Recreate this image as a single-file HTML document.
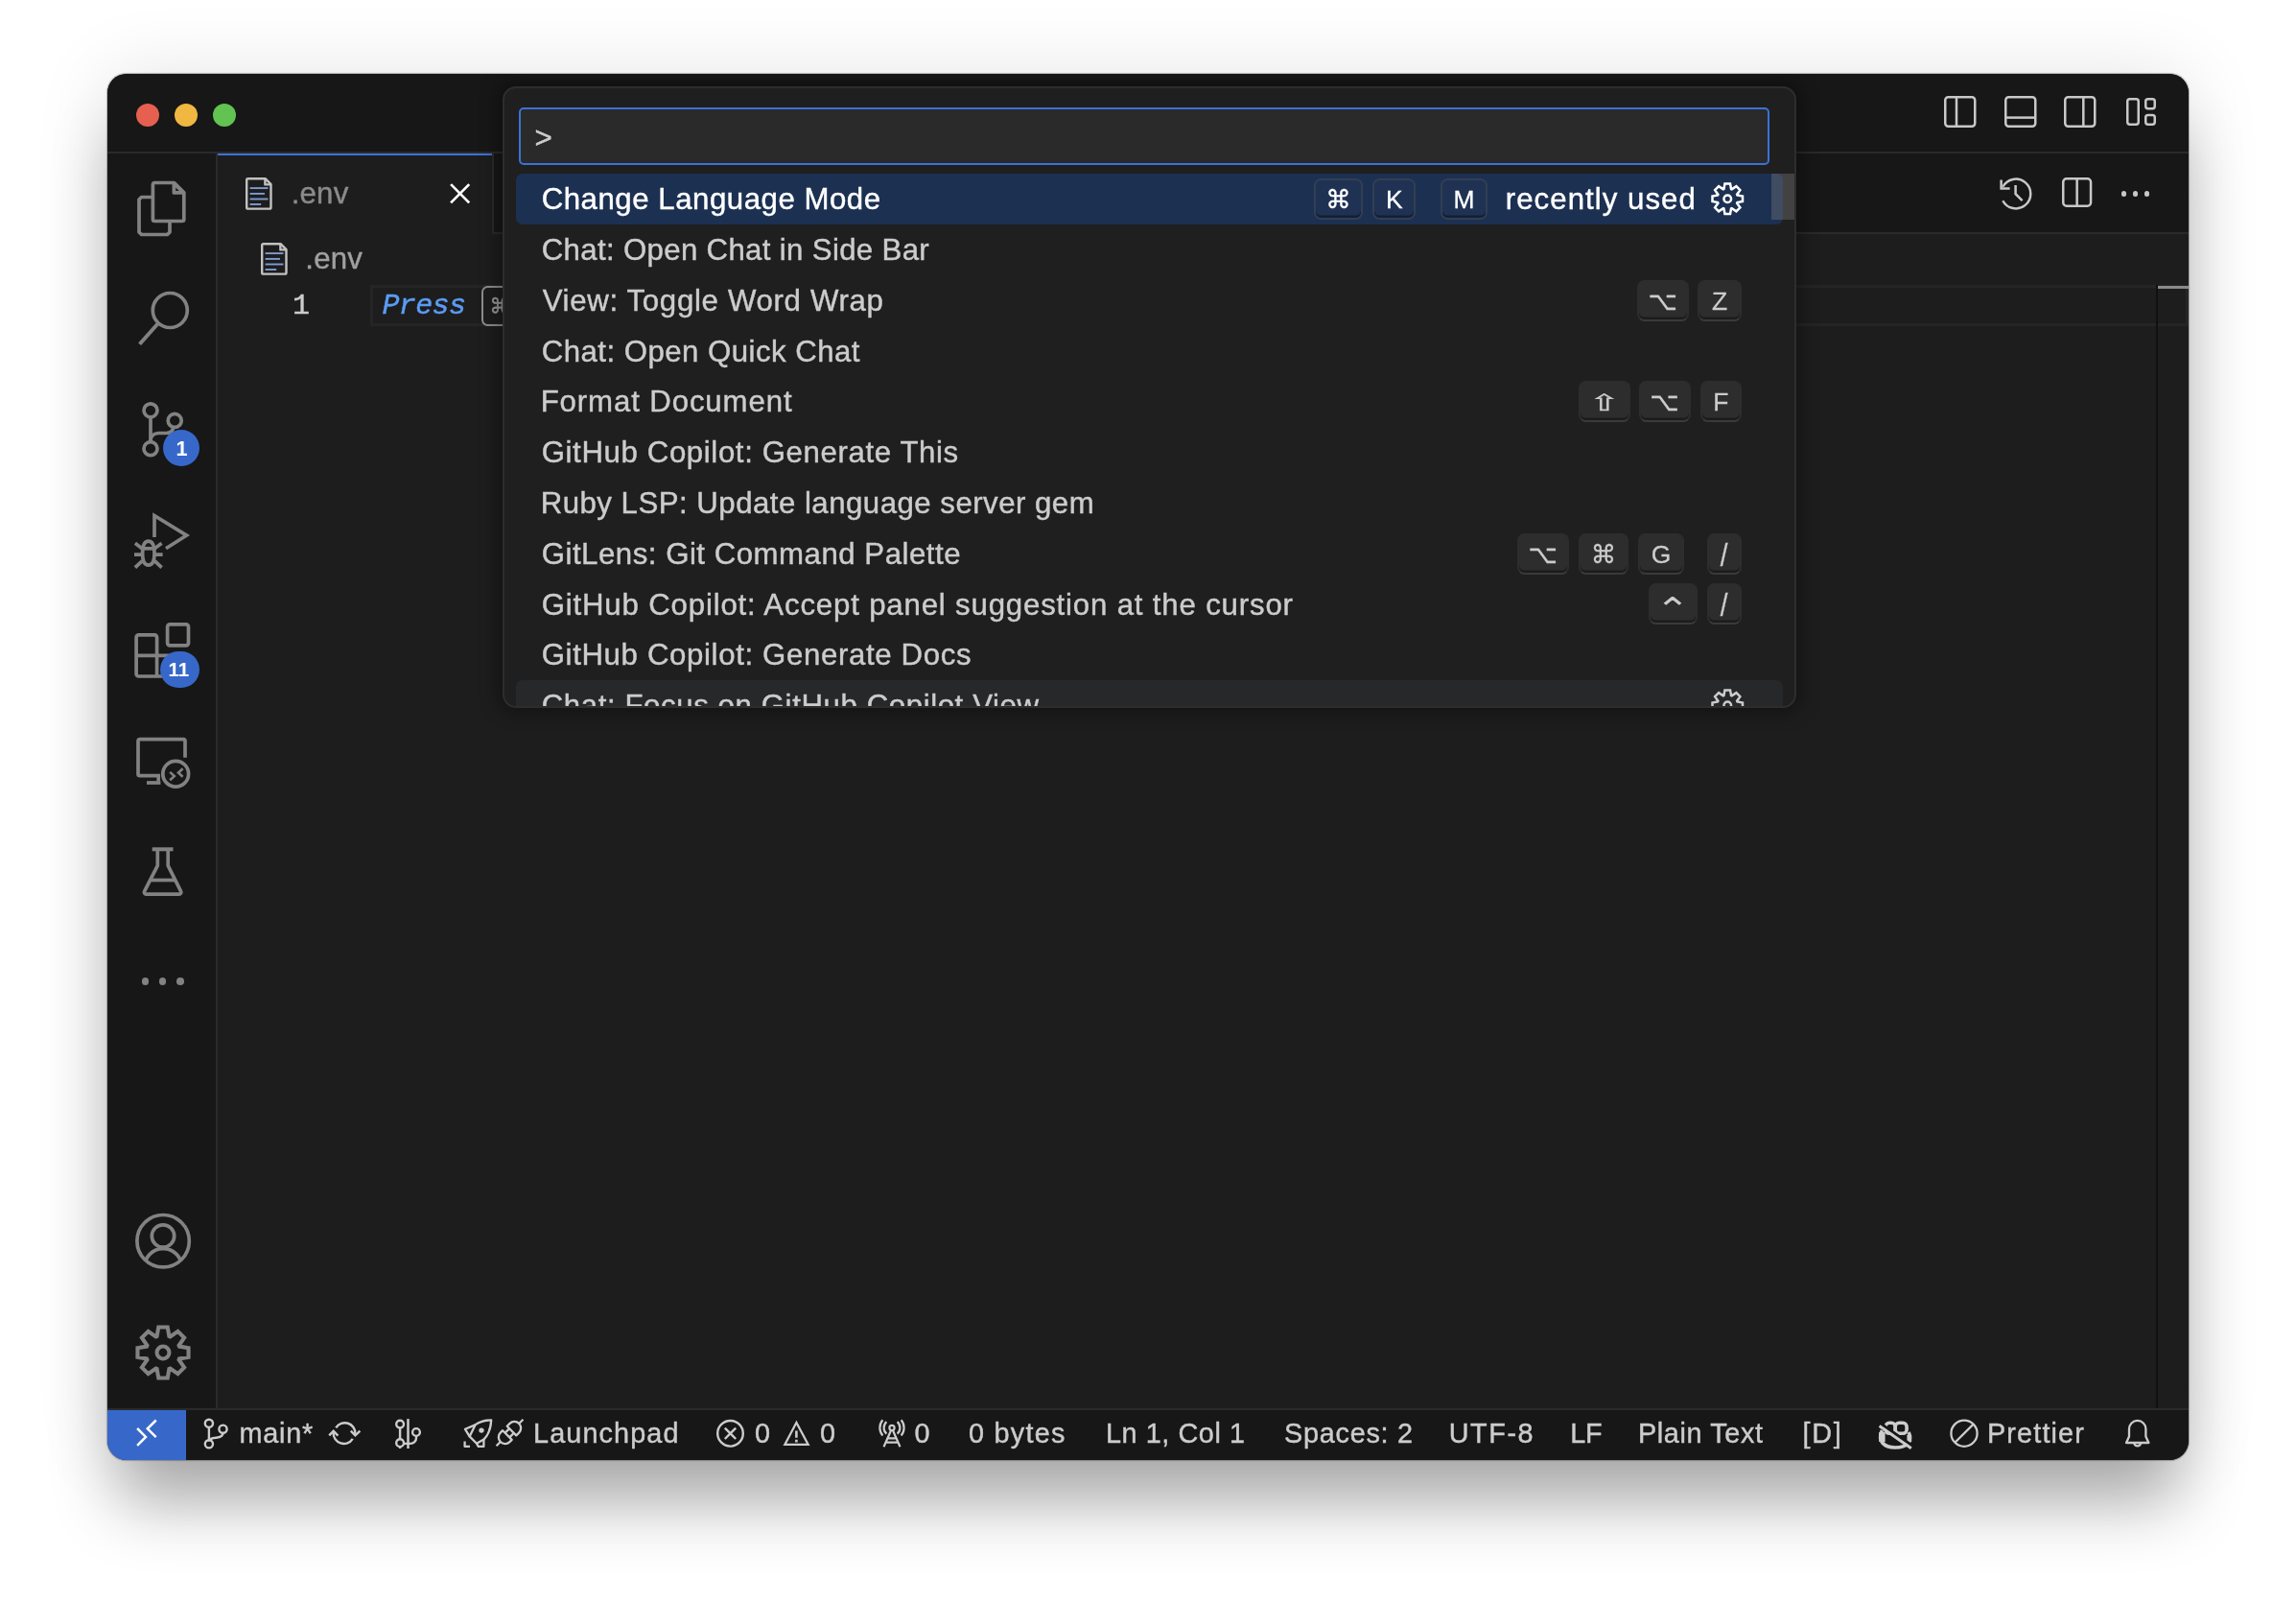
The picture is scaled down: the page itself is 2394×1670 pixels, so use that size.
<!DOCTYPE html>
<html lang="en">
<head>
<meta charset="utf-8">
<title>.env — Visual Studio Code</title>
<style>
*{box-sizing:border-box;margin:0;padding:0}
html,body{width:2394px;height:1670px;overflow:hidden;background:#fff}
body{position:relative;font-family:"Liberation Sans",sans-serif;color:#ccc}
#shadow{position:absolute;left:112px;top:77px;width:2170px;height:1445px;border-radius:20px;
 box-shadow:0 0 1px .5px rgba(0,0,0,.25),0 56px 68px -10px rgba(0,0,0,.30),0 0 80px 0 rgba(0,0,0,.11)}
#win{position:absolute;left:112px;top:77px;width:2170px;height:1445px;border-radius:20px;background:#171717;overflow:hidden}
#o{position:absolute;left:-112px;top:-77px;width:2394px;height:1670px;will-change:transform}
#o span{-webkit-text-stroke:.42px currentColor}
svg{position:absolute;overflow:visible}
.key{position:absolute;height:43px;border-radius:7.5px;background:#2d2d2d;border:2px solid #2d2d2d;border-bottom-color:#3a3a3a;box-shadow:inset 0 -2.4px 0 rgba(0,0,0,.36);color:#ccc;text-align:center;font:26.4px/41px "Liberation Sans","DejaVu Sans",sans-serif;-webkit-text-stroke:.3px currentColor}
.key i{display:inline-block;font-style:normal}
.key.sel{background:rgba(128,128,128,.03);border-color:rgba(70,74,84,.5);color:#fff}
</style>
</head>
<body>
<div id="shadow"></div>
<div id="win"><div id="o">
<div style="position:absolute;left:112px;top:77px;width:2170px;height:81px;background:#171717"></div>
<div style="position:absolute;left:112px;top:158px;width:2170px;height:2px;background:#2a2a2a"></div>
<div style="position:absolute;left:142px;top:108px;width:24px;height:24px;border-radius:50%;background:#e5604f"></div>
<div style="position:absolute;left:182px;top:108px;width:24px;height:24px;border-radius:50%;background:#f0b840"></div>
<div style="position:absolute;left:222px;top:108px;width:24px;height:24px;border-radius:50%;background:#62c350"></div>
<svg style="left:2027.3px;top:100px" width="33.5" height="33" viewBox="0 0 33.5 33" fill="none" ><rect x="1.25" y="1.25" width="31.0" height="30.5" rx="3.2" stroke="#c8c8c8" stroke-width="2.5"/><path d="M13 1V32" stroke="#c8c8c8" stroke-width="2.5"/></svg>
<svg style="left:2089.8px;top:100px" width="33.5" height="33" viewBox="0 0 33.5 33" fill="none" ><rect x="1.25" y="1.25" width="31.0" height="30.5" rx="3.2" stroke="#c8c8c8" stroke-width="2.5"/><path d="M1 22.6H32.5" stroke="#c8c8c8" stroke-width="2.5"/></svg>
<svg style="left:2152px;top:100px" width="33.5" height="33" viewBox="0 0 33.5 33" fill="none" ><rect x="1.25" y="1.25" width="31.0" height="30.5" rx="3.2" stroke="#c8c8c8" stroke-width="2.5"/><path d="M20.3 1V32" stroke="#c8c8c8" stroke-width="2.5"/></svg>
<svg style="left:2216.8px;top:102px" width="31.5" height="29" viewBox="0 0 31.5 29" fill="none" ><rect x="1.25" y="1.25" width="11.5" height="26.5" rx="2.4" stroke="#c8c8c8" stroke-width="2.5"/><rect x="20.25" y="1.25" width="9.5" height="10.0" rx="2.4" stroke="#c8c8c8" stroke-width="2.5"/><rect x="20.25" y="17.95" width="9.5" height="9.8" rx="2.4" stroke="#c8c8c8" stroke-width="2.5"/></svg>
<div style="position:absolute;left:112px;top:160px;width:115px;height:1308px;background:#171717;border-right:2px solid #2a2a2a"></div>
<svg style="left:143px;top:187.5px" width="50.6" height="58" viewBox="143 187.5 50.6 58" fill="none"><path d="M161.4 190H181.6L191.8 200.2V228a2 2 0 0 1-2 2H161.4a2 2 0 0 1-2-2V192a2 2 0 0 1 2-2Z" stroke="#828282" stroke-width="3.7" stroke-linejoin="round"/><path d="M181.4 190.6V200.4H191.4Z" stroke="#828282" stroke-width="3.7" stroke-linejoin="round"/><path d="M158 205H147.5L145 207.5V241.5L147.5 244H174.5L177 241.5V231.5" stroke="#828282" stroke-width="3.7" stroke-linejoin="round"/></svg>
<svg style="left:144px;top:302.8px" width="53.4" height="57.7" viewBox="144 302.8 53.4 57.7" fill="none"><circle cx="177.3" cy="323.3" r="18" stroke="#828282" stroke-width="3.7"/><path d="M165.2 336.6L145.6 358.6" stroke="#828282" stroke-width="4.0"/></svg>
<svg style="left:148px;top:418.5px" width="43" height="57.3" viewBox="148 418.5 43 57.3" fill="none"><circle cx="157" cy="427.3" r="7" stroke="#828282" stroke-width="3.7"/><circle cx="182.2" cy="437.9" r="7" stroke="#828282" stroke-width="3.7"/><circle cx="157" cy="467.2" r="7" stroke="#828282" stroke-width="3.7"/><path d="M157 434.5V460" stroke="#828282" stroke-width="3.7"/><path d="M181 445C180 449 177.5 451 173.5 451H165.5C160.5 451 157 454 157 459.5" stroke="#828282" stroke-width="3.7"/></svg>
<svg style="left:140.4px;top:533.9px" width="57.6" height="58.1" viewBox="140.4 533.9 57.6 58.1" fill="none"><path d="M161.4 559.8V537.4L195 558L173.4 571.6" stroke="#828282" stroke-width="3.7"/><path d="M149 577C149 568 151.3 564 155.2 564S161.4 568 161.4 577C161.4 585 159 589 155.2 589S149 585 149 577Z" stroke="#828282" stroke-width="3.7"/><path d="M149.3 571.7H161.1" stroke="#828282" stroke-width="3.7"/><path d="M141.3 566.2L148.8 571.8M169 566.2L161.6 571.8M140.4 578H148.6M161.8 578H170M148.8 584.5L141.3 591.6M161.6 584.5L169 591.6" stroke="#828282" stroke-width="3.7"/></svg>
<svg style="left:140.4px;top:649px" width="58.1" height="58" viewBox="140.4 649 58.1 58" fill="none"><rect x="175" y="650.9" width="21.9" height="21.9" rx="2.5" stroke="#828282" stroke-width="3.7"/><path d="M142.5 683.4H183.1a2.5 2.5 0 0 1 2.5 2.5V702.5a2.5 2.5 0 0 1-2.5 2.5H145a2.5 2.5 0 0 1-2.5-2.5V664.4a2.5 2.5 0 0 1 2.5-2.5H161.5a2.5 2.5 0 0 1 2.5 2.5V705" stroke="#828282" stroke-width="3.7"/></svg>
<svg style="left:142px;top:769.3px" width="56.5" height="52.4" viewBox="142 769.3 56.5 52.4" fill="none"><path d="M193 790V773a2 2 0 0 0-2-2H146a2 2 0 0 0-2 2V807a2 2 0 0 0 2 2H165.2V814.5" stroke="#828282" stroke-width="3.7"/><path d="M153 816.3H167.4" stroke="#828282" stroke-width="3.7"/><circle cx="183.2" cy="807" r="13.4" stroke="#828282" stroke-width="3.7"/><path d="M177.2 805.2L181.8 809.4L177.2 813.6M190.6 801.5L186 805.8L190.6 810" stroke="#828282" stroke-width="2.6"/></svg>
<svg style="left:148px;top:883.5px" width="43" height="49.5" viewBox="148 883.5 43 49.5" fill="none"><path d="M158.7 884.8H180.5" stroke="#828282" stroke-width="4"/><path d="M164.3 886V901.8L150.6 928.6a2 2 0 0 0 1.8 3H186.8a2 2 0 0 0 1.8-3L175.2 901.8V886" stroke="#828282" stroke-width="3.7" stroke-linejoin="round"/><path d="M157.3 917H182" stroke="#828282" stroke-width="3.7"/></svg>
<div style="position:absolute;left:147.7px;top:1019.4px;width:7.6px;height:7.6px;border-radius:50%;background:#828282"></div>
<div style="position:absolute;left:165.89999999999998px;top:1019.4px;width:7.6px;height:7.6px;border-radius:50%;background:#828282"></div>
<div style="position:absolute;left:184.0px;top:1019.4px;width:7.6px;height:7.6px;border-radius:50%;background:#828282"></div>
<svg style="left:140.5px;top:1265.3px" width="58" height="57.5" viewBox="140.5 1265.3 58 57.5" fill="none"><defs><clipPath id="acc1265"><circle cx="169.6" cy="1294" r="27.2"/></clipPath></defs><circle cx="169.6" cy="1294" r="27.2" stroke="#828282" stroke-width="3.7"/><circle cx="169.5" cy="1288.8" r="11.7" stroke="#828282" stroke-width="3.7"/><circle cx="169.6" cy="1321.5" r="19.6" stroke="#828282" stroke-width="3.7" clip-path="url(#acc1265)"/></svg>
<svg style="left:140.5px;top:1381px" width="58" height="58" viewBox="140.5 1381 58 58" fill="none"><path d="M163.10 1392.96L164.80 1383.46L174.20 1383.46L175.90 1392.96L177.02 1393.43L184.94 1387.91L191.59 1394.56L186.07 1402.48L186.54 1403.60L196.04 1405.30L196.04 1414.70L186.54 1416.40L186.07 1417.52L191.59 1425.44L184.94 1432.09L177.02 1426.57L175.90 1427.04L174.20 1436.54L164.80 1436.54L163.10 1427.04L161.98 1426.57L154.06 1432.09L147.41 1425.44L152.93 1417.52L152.46 1416.40L142.96 1414.70L142.96 1405.30L152.46 1403.60L152.93 1402.48L147.41 1394.56L154.06 1387.91L161.98 1393.43Z" stroke="#828282" stroke-width="4.1" stroke-linejoin="miter"/><circle cx="169.5" cy="1410.0" r="6.45" stroke="#828282" stroke-width="4.1"/></svg>
<div style="position:absolute;left:169.7px;top:447.8px;width:38.2px;height:38.2px;border-radius:50%;background:#3768c9"></div>
<span style="position:absolute;left:183.6px;top:456.6px;font:normal 700 21.6px/1 'Liberation Sans',sans-serif;letter-spacing:0.000px;color:#fff;white-space:pre;-webkit-text-stroke:0">1</span>
<div style="position:absolute;left:167.4px;top:678.6px;width:40.4px;height:38px;border-radius:19px;background:#3768c9"></div>
<span style="position:absolute;left:175.6px;top:687.5px;font:normal 700 20.5px/1 'Liberation Sans',sans-serif;letter-spacing:0.000px;color:#fff;white-space:pre;-webkit-text-stroke:0">11</span>
<div style="position:absolute;left:227px;top:160px;width:2055px;height:82px;background:#171717"></div>
<div style="position:absolute;left:227px;top:242px;width:2055px;height:2px;background:#2a2a2a"></div>
<div style="position:absolute;left:227px;top:160px;width:286px;height:84px;background:#1d1d1d"></div>
<div style="position:absolute;left:227px;top:160px;width:286px;height:2px;background:#3b72d8"></div>
<div style="position:absolute;left:513px;top:160px;width:2px;height:82px;background:#2a2a2a"></div>
<svg style="left:256.1px;top:185px" width="27.7" height="34.9" viewBox="256.1 185 27.7 34.9" fill="none"><path d="M258.70 186.20H276.70L282.60 192.10V216.20a1.4 1.4 0 0 1-1.4 1.4H258.70a1.4 1.4 0 0 1-1.4-1.4V187.60a1.4 1.4 0 0 1 1.4-1.4Z" stroke="#c2c2c2" stroke-width="2.4" stroke-linejoin="round"/><path d="M276.50 186.60V192.40H282.30" stroke="#c2c2c2" stroke-width="2.4" stroke-linejoin="round"/><path d="M260.70 196.10H279.60" stroke="#7f9bd1" stroke-width="1.9"/><path d="M260.70 201.90H276.10" stroke="#7f9bd1" stroke-width="1.9"/><path d="M260.70 207.50H279.60" stroke="#7f9bd1" stroke-width="1.9"/><path d="M260.70 213.00H272.30" stroke="#7f9bd1" stroke-width="1.9"/></svg>
<span style="position:absolute;left:303.7px;top:186.4px;font:normal 400 31.2px/1 'Liberation Sans',sans-serif;letter-spacing:0.200px;color:#8b8b8b;white-space:pre;">.env</span>
<svg style="left:469px;top:191px" width="22" height="22" viewBox="469 191 22 22" fill="none"><path d="M470.1 192.1L489.2 211.4M489.2 192.1L470.1 211.4" stroke="#ffffff" stroke-width="2.7"/></svg>
<svg style="left:2084.6px;top:184.6px" width="34.2" height="34" viewBox="0 0 34.2 34" fill="none" ><path d="M3.30 9.77A15.4 15.4 0 1 1 3.30 24.23" stroke="#c8c8c8" stroke-width="2.5"/><path d="M1.6 2.4V11.4H10.6" stroke="#c8c8c8" stroke-width="2.5"/><path d="M16.6 8V17.2L23.6 24.2" stroke="#c8c8c8" stroke-width="2.5"/></svg>
<svg style="left:2149.5px;top:185.2px" width="31.3" height="31" viewBox="0 0 31.3 31" fill="none" ><rect x="1.25" y="1.25" width="28.8" height="28.5" rx="3.5" stroke="#c8c8c8" stroke-width="2.5"/><path d="M15.65 1V30" stroke="#c8c8c8" stroke-width="2.5"/></svg>
<div style="position:absolute;left:2211.9px;top:199.2px;width:5.4px;height:5.4px;border-radius:50%;background:#c8c8c8"></div>
<div style="position:absolute;left:2223.7000000000003px;top:199.2px;width:5.4px;height:5.4px;border-radius:50%;background:#c8c8c8"></div>
<div style="position:absolute;left:2235.6000000000004px;top:199.2px;width:5.4px;height:5.4px;border-radius:50%;background:#c8c8c8"></div>
<div style="position:absolute;left:227px;top:244px;width:2055px;height:1224px;background:#1d1d1d"></div>
<svg style="left:271.6px;top:252.9px" width="27.7" height="34.9" viewBox="271.6 252.9 27.7 34.9" fill="none"><path d="M274.20 254.10H292.20L298.10 260.00V284.10a1.4 1.4 0 0 1-1.4 1.4H274.20a1.4 1.4 0 0 1-1.4-1.4V255.50a1.4 1.4 0 0 1 1.4-1.4Z" stroke="#c2c2c2" stroke-width="2.4" stroke-linejoin="round"/><path d="M292.00 254.50V260.30H297.80" stroke="#c2c2c2" stroke-width="2.4" stroke-linejoin="round"/><path d="M276.20 264.00H295.10" stroke="#7f9bd1" stroke-width="1.9"/><path d="M276.20 269.80H291.60" stroke="#7f9bd1" stroke-width="1.9"/><path d="M276.20 275.40H295.10" stroke="#7f9bd1" stroke-width="1.9"/><path d="M276.20 280.90H287.80" stroke="#7f9bd1" stroke-width="1.9"/></svg>
<span style="position:absolute;left:318.3px;top:254.3px;font:normal 400 31.2px/1 'Liberation Sans',sans-serif;letter-spacing:0.200px;color:#a0a0a0;white-space:pre;">.env</span>
<div style="position:absolute;left:386px;top:297.2px;width:1896px;height:42.8px;border:3.8px solid #252525"></div>
<span style="position:absolute;left:305.0px;top:304.0px;font:normal 400 30px/1 'Liberation Mono',monospace;letter-spacing:0.000px;color:#cccccc;white-space:pre;">1</span>
<span style="position:absolute;left:398.4px;top:304.0px;font:italic 400 30px/1 'Liberation Mono',monospace;letter-spacing:-0.600px;color:#5b9cf5;white-space:pre;">Press</span>
<div style="position:absolute;left:502px;top:298px;width:70px;height:42px;border:2px solid #8c8c8c;border-radius:6.5px"></div>
<span style="position:absolute;left:512.1px;top:305.9px;font:normal 400 31px/1 'Liberation Mono',monospace;letter-spacing:-2.000px;color:#9a9a9a;white-space:pre;">⌘I</span>
<span style="position:absolute;left:587.0px;top:304.9px;font:italic 400 28.8px/1 'Liberation Mono',monospace;letter-spacing:0.075px;color:#5b9cf5;white-space:pre;">to ask GitHub Copilot Chat to do something. Start typing to dismiss.</span>
<div style="position:absolute;left:2247.6px;top:297.3px;width:2px;height:1171px;background:#101010"></div>
<div style="position:absolute;left:2249.6px;top:297.7px;width:32.4px;height:3.4px;background:#8a8a8a"></div>
<div style="position:absolute;left:112px;top:1468px;width:2170px;height:54px;background:#171717"></div>
<div style="position:absolute;left:112px;top:1468px;width:2170px;height:2px;background:#2a2a2a"></div>
<div style="position:absolute;left:112px;top:1470px;width:82px;height:52px;background:#3768c9"></div>
<svg style="left:141.8px;top:1480px" width="21.6" height="27" viewBox="141.8 1480 21.6 27" fill="none"><path d="M142.9 1489L151.8 1497.9L142.9 1507M162.5 1480.5L153.6 1489.3L162.5 1498.1" stroke="#ffffff" stroke-width="2.5"/></svg>
<svg style="left:211.5px;top:1477.6px" width="26.1" height="33.1" viewBox="211.5 1477.6 26.1 33.1" fill="none"><circle cx="217.4" cy="1483.4" r="4.1" stroke="#cccccc" stroke-width="2.4"/><circle cx="232" cy="1489.3" r="4.1" stroke="#cccccc" stroke-width="2.4"/><circle cx="217.4" cy="1504.9" r="4.1" stroke="#cccccc" stroke-width="2.4"/><path d="M217.4 1487.5V1500.8" stroke="#cccccc" stroke-width="2.4"/><path d="M232 1493.4C232 1497 229 1498 225 1498.4C220.5 1498.8 217.4 1499.6 217.4 1502" stroke="#cccccc" stroke-width="2.4"/></svg>
<span style="position:absolute;left:249.5px;top:1480.1px;font:normal 400 28.8px/1 'Liberation Sans',sans-serif;letter-spacing:0.750px;color:#cccccc;white-space:pre;">main*</span>
<svg style="left:343px;top:1478px" width="33" height="31" viewBox="343 1478 33 31" fill="none"><path d="M350.26 1488.32A10.9 10.9 0 0 1 370.37 1494.86" stroke="#cccccc" stroke-width="2.4"/><path d="M367.74 1499.88A10.9 10.9 0 0 1 347.63 1493.34" stroke="#cccccc" stroke-width="2.4"/><path d="M365.8 1491.6L370.4 1496.4L375.4 1491.6" stroke="#cccccc" stroke-width="2.4"/><path d="M343.2 1496.4L347.7 1491.8L352.4 1496.6" stroke="#cccccc" stroke-width="2.4"/></svg>
<svg style="left:411px;top:1477px" width="27.7" height="35" viewBox="411 1477 27.7 35" fill="none"><circle cx="417.1" cy="1484.6" r="3.9" stroke="#cccccc" stroke-width="2.4"/><circle cx="417.1" cy="1504.2" r="3.9" stroke="#cccccc" stroke-width="2.4"/><circle cx="434" cy="1493" r="3.9" stroke="#cccccc" stroke-width="2.4"/><path d="M417.1 1488.5V1500.3M417.1 1508.1V1510" stroke="#cccccc" stroke-width="2.4"/><path d="M425.5 1479.1V1510" stroke="#cccccc" stroke-width="2.5"/><path d="M434 1496.9V1499A5.9 5.9 0 0 1 428.1 1504.9H421" stroke="#cccccc" stroke-width="2.4"/></svg>
<svg style="left:483px;top:1479px" width="30.6" height="31" viewBox="483 1479 30.6 31" fill="none"><path d="M512.2 1480.4C505 1480.6 499.5 1482.2 495.5 1485.4L489.6 1497.4L497 1504.8L504.4 1500.6C509 1496 511.8 1489.5 512.2 1480.4Z" stroke="#cccccc" stroke-width="2.3" stroke-linejoin="round"/><path d="M495.5 1485.4L485 1489.8L489.6 1497.4" stroke="#cccccc" stroke-width="2.3" stroke-linejoin="round"/><path d="M497 1504.8L498.8 1507.9H504.4V1500.6" stroke="#cccccc" stroke-width="2.3" stroke-linejoin="round"/><path d="M484.6 1502.6V1507.9H490" stroke="#cccccc" stroke-width="2.3" stroke-linejoin="round"/><circle cx="502" cy="1491.1" r="2.7" fill="#cccccc"/></svg>
<svg style="left:517.4px;top:1479px" width="28.6" height="30" viewBox="517.4 1479 28.6 30" fill="none"><g transform="translate(531.9 1493.5) rotate(-44.6)"><path d="M-19.6 0H-13.6M13.6 0H19.6" stroke="#cccccc" stroke-width="2.3" stroke-linejoin="round"/><path d="M-3.6 -6.8H-6.8A6.8 6.8 0 0 0 -6.8 6.8H-3.6Z" stroke="#cccccc" stroke-width="2.3" stroke-linejoin="round"/><path d="M-3.6 -3.3H2.6M-3.6 3.3H2.6" stroke="#cccccc" stroke-width="2.3" stroke-linejoin="round"/><path d="M2.8 -6.8H6.8A6.8 6.8 0 0 1 6.8 6.8H2.8Z" stroke="#cccccc" stroke-width="2.3" stroke-linejoin="round"/></g></svg>
<span style="position:absolute;left:556.0px;top:1480.1px;font:normal 400 28.8px/1 'Liberation Sans',sans-serif;letter-spacing:1.125px;color:#cccccc;white-space:pre;">Launchpad</span>
<svg style="left:747.4px;top:1480px" width="29.3" height="29.3" viewBox="747.4 1480 29.3 29.3" fill="none"><circle cx="761.9" cy="1494.3" r="13.3" stroke="#cccccc" stroke-width="2.4"/><path d="M756.2 1488.6L767.6 1500M767.6 1488.6L756.2 1500" stroke="#cccccc" stroke-width="2.4"/></svg>
<span style="position:absolute;left:787.0px;top:1480.1px;font:normal 400 28.8px/1 'Liberation Sans',sans-serif;letter-spacing:0.000px;color:#cccccc;white-space:pre;">0</span>
<svg style="left:816px;top:1480.5px" width="29" height="27.5" viewBox="816 1480.5 29 27.5" fill="none"><path d="M830.4 1482.4L818.3 1505.4H842.7Z" stroke="#cccccc" stroke-width="2.2" stroke-linejoin="miter"/><path d="M830.4 1491V1498.3M830.4 1500.2V1502.9" stroke="#cccccc" stroke-width="2.6"/></svg>
<span style="position:absolute;left:855.0px;top:1480.1px;font:normal 400 28.8px/1 'Liberation Sans',sans-serif;letter-spacing:0.000px;color:#cccccc;white-space:pre;">0</span>
<svg style="left:915.5px;top:1480px" width="27.9" height="28.5" viewBox="915.5 1480 27.9 28.5" fill="none"><circle cx="929.5" cy="1488.4" r="2.6" stroke="#cccccc" stroke-width="2.2"/><path d="M928.6 1491L921 1508.2M930.4 1491L938 1508.2M925.2 1499.4H933.8M923.4 1503.6H935.6" stroke="#cccccc" stroke-width="2.2"/><path d="M923.88 1482.16A8.4 8.4 0 0 0 923.88 1494.64" stroke="#cccccc" stroke-width="2.2"/><path d="M935.12 1482.16A8.4 8.4 0 0 1 935.12 1494.64" stroke="#cccccc" stroke-width="2.2"/><path d="M919.85 1480.30A12.6 12.6 0 0 0 919.85 1496.50" stroke="#cccccc" stroke-width="2.2"/><path d="M939.15 1480.30A12.6 12.6 0 0 1 939.15 1496.50" stroke="#cccccc" stroke-width="2.2"/></svg>
<span style="position:absolute;left:953.5px;top:1480.1px;font:normal 400 28.8px/1 'Liberation Sans',sans-serif;letter-spacing:0.000px;color:#cccccc;white-space:pre;">0</span>
<span style="position:absolute;left:1010.0px;top:1480.1px;font:normal 400 28.8px/1 'Liberation Sans',sans-serif;letter-spacing:1.267px;color:#cccccc;white-space:pre;">0 bytes</span>
<span style="position:absolute;left:1152.9px;top:1480.1px;font:normal 400 28.8px/1 'Liberation Sans',sans-serif;letter-spacing:0.580px;color:#cccccc;white-space:pre;">Ln 1, Col 1</span>
<span style="position:absolute;left:1339.0px;top:1480.1px;font:normal 400 28.8px/1 'Liberation Sans',sans-serif;letter-spacing:0.750px;color:#cccccc;white-space:pre;">Spaces: 2</span>
<span style="position:absolute;left:1510.7px;top:1480.1px;font:normal 400 28.8px/1 'Liberation Sans',sans-serif;letter-spacing:1.575px;color:#cccccc;white-space:pre;">UTF-8</span>
<span style="position:absolute;left:1637.3px;top:1480.1px;font:normal 400 28.8px/1 'Liberation Sans',sans-serif;letter-spacing:-0.300px;color:#cccccc;white-space:pre;">LF</span>
<span style="position:absolute;left:1708.0px;top:1480.1px;font:normal 400 28.8px/1 'Liberation Sans',sans-serif;letter-spacing:0.622px;color:#cccccc;white-space:pre;">Plain Text</span>
<span style="position:absolute;left:1879.4px;top:1480.1px;font:normal 400 28.8px/1 'Liberation Sans',sans-serif;letter-spacing:1.800px;color:#cccccc;white-space:pre;">[D]</span>
<svg style="left:1958.8px;top:1481px" width="35" height="28" viewBox="1958.8 1481 35 28" fill="none"><rect x="1965.8" y="1483.3" width="10.2" height="11" rx="4" stroke="#cccccc" stroke-width="3.6"/><rect x="1976" y="1483.3" width="11.9" height="11" rx="4" stroke="#cccccc" stroke-width="3.6"/><path d="M1962.2 1491C1960 1496 1960 1501 1962.5 1504C1968 1510.6 1983.5 1510.6 1989.5 1504.5C1991.6 1502 1991.8 1497 1990 1493" stroke="#cccccc" stroke-width="3.6"/><path d="M1962.2 1493V1503" stroke="#cccccc" stroke-width="6.4"/><path d="M1990.6 1496V1503" stroke="#cccccc" stroke-width="4.8"/><path d="M1960.8 1484L1994.3 1507.5" stroke="#171717" stroke-width="2.8"/><path d="M1959.4 1486.4L1992.6 1509.7" stroke="#cccccc" stroke-width="3"/></svg>
<svg style="left:2033px;top:1480px" width="29.6" height="29.6" viewBox="2033 1480 29.6 29.6" fill="none"><circle cx="2048" cy="1494.2" r="13.6" stroke="#cccccc" stroke-width="2.3"/><path d="M2038.4 1503.8L2057.6 1484.6" stroke="#cccccc" stroke-width="2.3"/></svg>
<span style="position:absolute;left:2072.0px;top:1480.1px;font:normal 400 28.8px/1 'Liberation Sans',sans-serif;letter-spacing:1.143px;color:#cccccc;white-space:pre;">Prettier</span>
<svg style="left:2216px;top:1479px" width="26" height="30" viewBox="2216 1479 26 30" fill="none"><path d="M2217 1504L2220 1497.4V1489.6A8.7 8.7 0 0 1 2237.4 1489.6V1497.4L2240.4 1504Z" stroke="#cccccc" stroke-width="2.3" stroke-linejoin="round"/><path d="M2225.2 1504.6A3.6 3.6 0 0 0 2232.2 1504.6" stroke="#cccccc" stroke-width="2.3" stroke-linejoin="round"/></svg>
<div style="position:absolute;left:524px;top:90px;width:1349px;height:648px;background:#1f1f1f;border:2px solid #2d2d2d;border-radius:14px;box-shadow:0 0 19px 5px rgba(0,0,0,.36)"></div>
<div style="position:absolute;left:526px;top:92px;width:1345px;height:644px;border-radius:12px;overflow:hidden"><div style="position:absolute;left:-526px;top:-92px">
<div style="position:absolute;left:541px;top:112px;width:1304px;height:60px;background:#2a2a2a;border:2.3px solid #3a72d8;border-radius:5px"></div>
<span style="position:absolute;left:557.5px;top:128.1px;font:normal 400 31.2px/1 'Liberation Sans',sans-serif;letter-spacing:0.000px;color:#cccccc;white-space:pre;">&gt;</span>
<div style="position:absolute;left:538px;top:181px;width:1321px;height:53px;background:#1c3052;border-radius:7px"></div>
<div style="position:absolute;left:538px;top:709.3px;width:1321px;height:52.8px;background:#27282a;border-radius:7px"></div>
<div style="position:absolute;left:1847px;top:181px;width:24px;height:48px;background:rgba(121,121,121,.4)"></div>
<span style="position:absolute;left:564.7px;top:192.1px;font:normal 400 31.2px/1 'Liberation Sans',sans-serif;letter-spacing:0.526px;color:#ffffff;white-space:pre;">Change Language Mode</span>
<span style="position:absolute;left:564.7px;top:244.9px;font:normal 400 31.2px/1 'Liberation Sans',sans-serif;letter-spacing:0.338px;color:#cccccc;white-space:pre;">Chat: Open Chat in Side Bar</span>
<span style="position:absolute;left:565.7px;top:297.7px;font:normal 400 31.2px/1 'Liberation Sans',sans-serif;letter-spacing:0.681px;color:#cccccc;white-space:pre;">View: Toggle Word Wrap</span>
<span style="position:absolute;left:564.7px;top:350.5px;font:normal 400 31.2px/1 'Liberation Sans',sans-serif;letter-spacing:0.465px;color:#cccccc;white-space:pre;">Chat: Open Quick Chat</span>
<span style="position:absolute;left:563.7px;top:403.3px;font:normal 400 31.2px/1 'Liberation Sans',sans-serif;letter-spacing:0.879px;color:#cccccc;white-space:pre;">Format Document</span>
<span style="position:absolute;left:564.7px;top:456.1px;font:normal 400 31.2px/1 'Liberation Sans',sans-serif;letter-spacing:0.618px;color:#cccccc;white-space:pre;">GitHub Copilot: Generate This</span>
<span style="position:absolute;left:563.7px;top:508.9px;font:normal 400 31.2px/1 'Liberation Sans',sans-serif;letter-spacing:0.486px;color:#cccccc;white-space:pre;">Ruby LSP: Update language server gem</span>
<span style="position:absolute;left:564.7px;top:561.7px;font:normal 400 31.2px/1 'Liberation Sans',sans-serif;letter-spacing:0.515px;color:#cccccc;white-space:pre;">GitLens: Git Command Palette</span>
<span style="position:absolute;left:564.7px;top:614.5px;font:normal 400 31.2px/1 'Liberation Sans',sans-serif;letter-spacing:0.827px;color:#cccccc;white-space:pre;">GitHub Copilot: Accept panel suggestion at the cursor</span>
<span style="position:absolute;left:564.7px;top:667.3px;font:normal 400 31.2px/1 'Liberation Sans',sans-serif;letter-spacing:0.639px;color:#cccccc;white-space:pre;">GitHub Copilot: Generate Docs</span>
<span style="position:absolute;left:564.7px;top:720.1px;font:normal 400 31.2px/1 'Liberation Sans',sans-serif;letter-spacing:0.594px;color:#cccccc;white-space:pre;">Chat: Focus on GitHub Copilot View</span>
<span style="position:absolute;left:1569.8px;top:191.8px;font:normal 400 31.2px/1 'Liberation Sans',sans-serif;letter-spacing:1.042px;color:#ffffff;white-space:pre;">recently used</span>
<svg style="left:1784.3px;top:190px" width="34.5" height="34.5" viewBox="1784.3 190 34.5 34.5" fill="none"><path d="M1797.74 197.12L1798.75 191.50L1804.35 191.50L1805.36 197.12L1806.02 197.39L1810.71 194.13L1814.67 198.09L1811.41 202.78L1811.68 203.44L1817.30 204.45L1817.30 210.05L1811.68 211.06L1811.41 211.72L1814.67 216.41L1810.71 220.37L1806.02 217.11L1805.36 217.38L1804.35 223.00L1798.75 223.00L1797.74 217.38L1797.08 217.11L1792.39 220.37L1788.43 216.41L1791.69 211.72L1791.42 211.06L1785.80 210.05L1785.80 204.45L1791.42 203.44L1791.69 202.78L1788.43 198.09L1792.39 194.13L1797.08 197.39Z" stroke="#ffffff" stroke-width="2.5" stroke-linejoin="miter"/><circle cx="1801.55" cy="207.25" r="3.81" stroke="#ffffff" stroke-width="2.5"/></svg>
<svg style="left:1784.3px;top:718.0px" width="34.5" height="34.5" viewBox="1784.3 718.0 34.5 34.5" fill="none"><path d="M1797.74 725.12L1798.75 719.50L1804.35 719.50L1805.36 725.12L1806.02 725.39L1810.71 722.13L1814.67 726.09L1811.41 730.78L1811.68 731.44L1817.30 732.45L1817.30 738.05L1811.68 739.06L1811.41 739.72L1814.67 744.41L1810.71 748.37L1806.02 745.11L1805.36 745.38L1804.35 751.00L1798.75 751.00L1797.74 745.38L1797.08 745.11L1792.39 748.37L1788.43 744.41L1791.69 739.72L1791.42 739.06L1785.80 738.05L1785.80 732.45L1791.42 731.44L1791.69 730.78L1788.43 726.09L1792.39 722.13L1797.08 725.39Z" stroke="#cccccc" stroke-width="2.5" stroke-linejoin="miter"/><circle cx="1801.55" cy="735.25" r="3.81" stroke="#cccccc" stroke-width="2.5"/></svg>
<div class="key sel" style="left:1370px;top:186.0px;width:50.7px;">⌘</div>
<div class="key sel" style="left:1431.4px;top:186.0px;width:45.0px;">K</div>
<div class="key sel" style="left:1501.7px;top:186.0px;width:49.7px;">M</div>
<div class="key" style="left:1707px;top:291.6px;width:53.7px;">⌥</div>
<div class="key" style="left:1770.3px;top:291.6px;width:45.3px;">Z</div>
<div class="key" style="left:1646.2px;top:397.2px;width:53.6px;"><i style="transform:translateY(1px) scale(1.55,.9)">⇧</i></div>
<div class="key" style="left:1709px;top:397.2px;width:53.5px;">⌥</div>
<div class="key" style="left:1773px;top:397.2px;width:42.6px;">F</div>
<div class="key" style="left:1582.2px;top:555.6px;width:53.6px;">⌥</div>
<div class="key" style="left:1646.2px;top:555.6px;width:51.5px;">⌘</div>
<div class="key" style="left:1708px;top:555.6px;width:48.0px;">G</div>
<div class="key" style="left:1780.3px;top:555.6px;width:35.3px;"><i style="transform:translateY(1px) scale(1.05,1.25)">/</i></div>
<div class="key" style="left:1719.4px;top:608.4px;width:50.2px;"><i style="transform:translateY(6.5px) scale(1.65,1.35);-webkit-text-stroke:0">⌃</i></div>
<div class="key" style="left:1780.3px;top:608.4px;width:35.3px;"><i style="transform:translateY(1px) scale(1.05,1.25)">/</i></div>
</div></div>
</div>
</body>
</html>
